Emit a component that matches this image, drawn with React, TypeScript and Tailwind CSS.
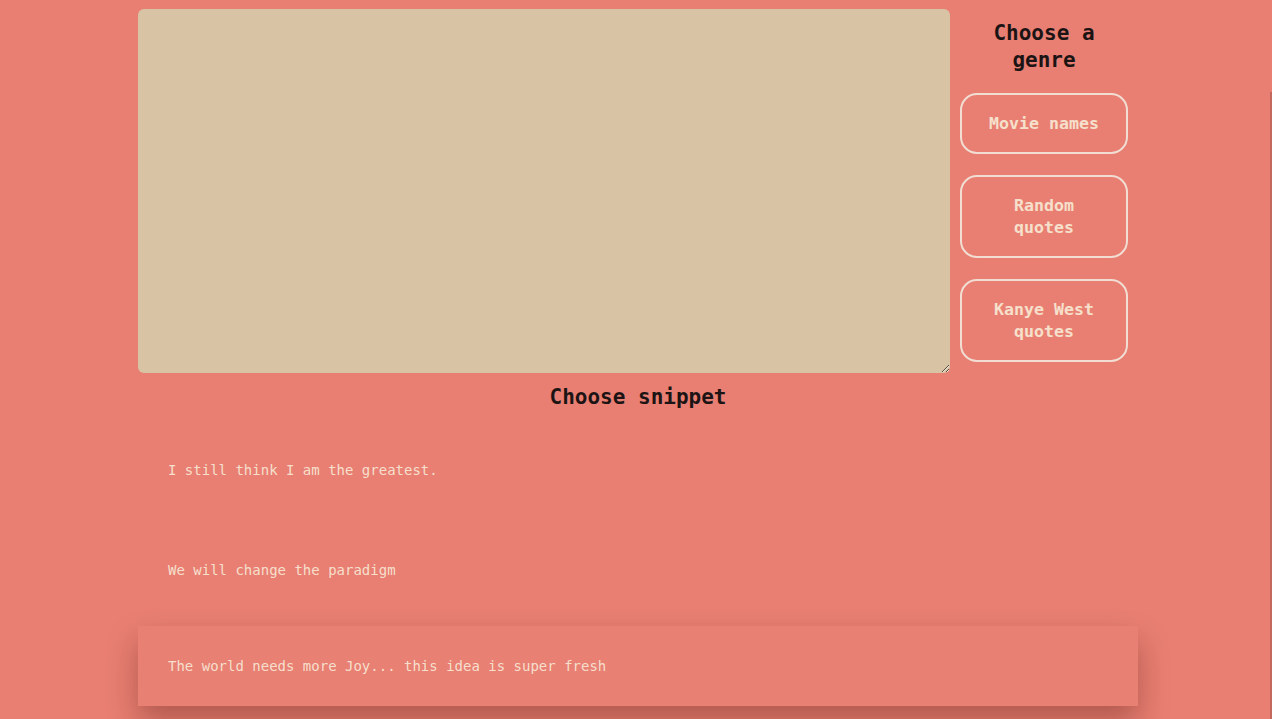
import React from 'react';

const genres = ['Movie names', 'Random quotes', 'Kanye West quotes'];

const snippets = [
  'I still think I am the greatest.',
  'We will change the paradigm',
  'The world needs more Joy... this idea is super fresh',
];

export default function App() {
  return (
    <div className="min-h-[719px] bg-[#e87f72] font-['DejaVu_Sans_Mono',monospace] text-[#1c1414]">
      <div className="ml-[138px] w-[1000px] pt-[9px]">
        <div className="flex gap-[10px]">
          <textarea className="h-[364px] w-[812px] rounded-[6px] bg-[#d9c3a5] p-3 outline-none" />

          <div className="flex w-[168px] flex-col">
            <h2 className="mt-[11px] text-center text-[21px] font-bold leading-[27px]">
              Choose a genre
            </h2>
            <div className="mt-[19px] flex flex-col gap-[21px]">
              {genres.map((g) => (
                <button
                  key={g}
                  className="rounded-[17px] border-2 border-[#f1ddd2] px-6 py-[17.5px] text-[16.6px] font-bold leading-[22px] text-[#f6e0cc]"
                >
                  {g}
                </button>
              ))}
            </div>
          </div>
        </div>

        <h2 className="mt-[10px] text-center text-[21px] font-bold leading-[28px]">Choose snippet</h2>

        <ul className="mt-[19px] flex flex-col gap-[20px]">
          {snippets.map((s, i) => (
            <li
              key={s}
              className={
                i === 2
                  ? 'flex h-[80px] -translate-y-1 items-center bg-[#e88073] px-[30px] text-[14px] text-[#f6dfcc] shadow-[0_16px_30px_rgba(80,20,15,0.35)]'
                  : 'flex h-[80px] items-center px-[30px] text-[14px] text-[#f6dfcc]'
              }
            >
              {s}
            </li>
          ))}
        </ul>
      </div>

      <div className="fixed right-0 top-[92px] bottom-0 w-[2px] bg-[#c4685d]" />
    </div>
  );
}
